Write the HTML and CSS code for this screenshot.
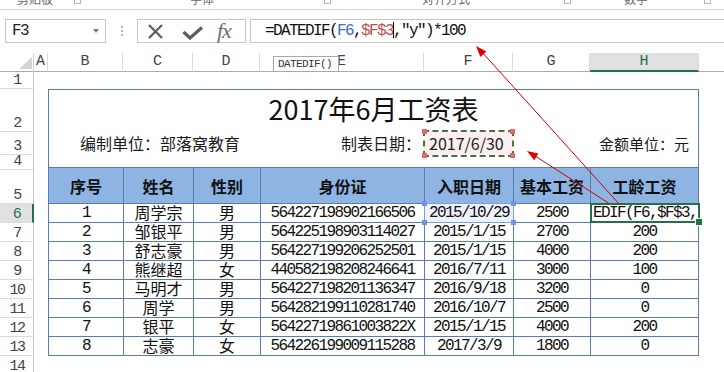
FILE: index.html
```html
<!DOCTYPE html>
<html lang="zh-CN">
<head>
<meta charset="utf-8">
<title>工资表</title>
<link rel="stylesheet" href="styles.css">
</head>
<body>
<div class="ribbon">
  <div class="grp g1"><span class="glabel">剪贴板</span><span class="launch"></span></div>
  <div class="grp g2"><span class="glabel">字体</span><span class="launch"></span></div>
  <div class="grp g3"><span class="glabel">对齐方式</span><span class="launch"></span></div>
  <div class="grp g4"><span class="glabel">数字</span><span class="launch"></span></div>
</div>

<div class="fbar">
  <div class="namebox"><span class="nb-text">F3</span><span class="nb-dd"></span></div>
  <div class="grip"><i></i><i></i><i></i></div>
  <div class="fbtns">
    <svg class="ic-x" width="15" height="15" viewBox="0 0 15 15"><path d="M1 1L14 14M14 1L1 14" stroke="#5c5c5c" stroke-width="2.2" fill="none"/></svg>
    <svg class="ic-ok" width="21" height="14" viewBox="0 0 21 14"><path d="M1.5 6L8 12L20 1.5" stroke="#5c5c5c" stroke-width="3.2" fill="none"/></svg>
    <span class="fx">fx</span>
  </div>
  <div class="finput"><span class="ftext">=DATEDIF(<span class="rb">F6</span>,<span class="rr">$F$3</span><span class="caret"></span>,"y")*100</span></div>
</div>

<div class="sheet">
  <div class="row rch">
    <div class="corner"><svg width="13" height="12" viewBox="0 0 13 12"><path d="M13 0L13 12L0 12Z" fill="#d4d4d4"/></svg></div>
    <div class="ch">A</div><div class="ch">B</div><div class="ch">C</div><div class="ch">D</div><div class="ch">E</div><div class="ch">F</div><div class="ch">G</div><div class="ch ch-sel">H</div><div class="ch-rest"></div>
  </div>

  <div class="row r1"><div class="rh">1</div></div>

  <div class="row r2">
    <div class="rh">2</div><div></div>
    <div class="title">2017年6月工资表</div>
  </div>

  <div class="row r3">
    <div class="rh">3</div><div></div>
    <div class="meta meta-left">编制单位：部落窝教育</div>
    <div class="meta meta-e">制表日期：</div>
    <div class="meta f3">2017/6/30</div>
    <div class="meta"></div>
    <div class="meta meta-h">金额单位：元</div>
  </div>

  <div class="row r4">
    <div class="rh">4</div><div></div>
    <div class="gap4"></div>
  </div>

  <div class="row r5">
    <div class="rh">5</div><div></div>
    <div class="th">序号</div><div class="th">姓名</div><div class="th">性别</div><div class="th">身份证</div><div class="th">入职日期</div><div class="th">基本工资</div><div class="th last">工龄工资</div>
  </div>

  <div class="row rd">
    <div class="rh rh-sel">6</div><div></div>
    <div class="td num">1</div><div class="td cjk">周学宗</div><div class="td cjk">男</div><div class="td num">564227198902166506</div><div class="td num f6">2015/10/29</div><div class="td num">2500</div><div class="td num last h6"><span class="h6-clip">EDIF(F6,$F$3,"y")*100</span></div>
  </div>
  <div class="row rd">
    <div class="rh">7</div><div></div>
    <div class="td num">2</div><div class="td cjk">邹银平</div><div class="td cjk">男</div><div class="td num">564225198903114027</div><div class="td num">2015/1/15</div><div class="td num">2700</div><div class="td num last">200</div>
  </div>
  <div class="row rd">
    <div class="rh">8</div><div></div>
    <div class="td num">3</div><div class="td cjk">舒志豪</div><div class="td cjk">男</div><div class="td num">564227199206252501</div><div class="td num">2015/1/15</div><div class="td num">4000</div><div class="td num last">200</div>
  </div>
  <div class="row rd">
    <div class="rh">9</div><div></div>
    <div class="td num">4</div><div class="td cjk">熊继超</div><div class="td cjk">女</div><div class="td num">440582198208246641</div><div class="td num">2016/7/11</div><div class="td num">3000</div><div class="td num last">100</div>
  </div>
  <div class="row rd">
    <div class="rh">10</div><div></div>
    <div class="td num">5</div><div class="td cjk">马明才</div><div class="td cjk">男</div><div class="td num">564227198201136347</div><div class="td num">2016/9/18</div><div class="td num">3200</div><div class="td num last">0</div>
  </div>
  <div class="row rd">
    <div class="rh">11</div><div></div>
    <div class="td num">6</div><div class="td cjk">周学</div><div class="td cjk">男</div><div class="td num">564282199110281740</div><div class="td num">2016/10/7</div><div class="td num">2500</div><div class="td num last">0</div>
  </div>
  <div class="row rd">
    <div class="rh">12</div><div></div>
    <div class="td num">7</div><div class="td cjk">银平</div><div class="td cjk">女</div><div class="td num">56422719861003822X</div><div class="td num">2015/1/15</div><div class="td num">4000</div><div class="td num last">200</div>
  </div>
  <div class="row rd">
    <div class="rh">13</div><div></div>
    <div class="td num">8</div><div class="td cjk">志豪</div><div class="td cjk">女</div><div class="td num">564226199009115288</div><div class="td num">2017/3/9</div><div class="td num">1800</div><div class="td num last">0</div>
  </div>
  <div class="row r14"><div class="rh">14</div></div>

  <div class="tip">DATEDIF()</div>
</div>

<svg class="arrows" width="724" height="372" viewBox="0 0 724 372">
  <line x1="620" y1="205" x2="481" y2="51" stroke="#d40000" stroke-width="1"/>
  <polygon points="476,46 486.4,51.5 480.4,56.9" fill="#e00000"/>
  <line x1="610" y1="204" x2="532" y2="154" stroke="#d40000" stroke-width="1"/>
  <polygon points="527,151 538.4,153.5 534.2,160.3" fill="#e00000"/>
</svg>
</body>
</html>
```

FILE: styles.css
```css
* { box-sizing: border-box; }

body {
  margin: 0;
  width: 724px;
  height: 372px;
  overflow: hidden;
  background: #ffffff;
  font-family: "Noto Sans CJK SC", sans-serif;
  color: #000;
}

/* ---------- ribbon tail ---------- */
.ribbon {
  height: 10px;
  border-bottom: 1px solid #d6d6d6;
  display: grid;
  grid-template-columns: 84px 250px 240px 140px 1fr;
  overflow: hidden;
}
.grp {
  display: flex;
  align-items: flex-start;
  height: 9px;
}
.g1 { padding-left: 17px; }
.g2 { padding-left: 106px; }
.g3 { padding-left: 88px; }
.g4 { padding-left: 50px; }
.glabel {
  font-size: 12px;
  line-height: 12px;
  color: #6a6a6a;
  margin-top: -7px;
  white-space: nowrap;
}
.launch {
  margin-left: auto;
  margin-right: 3px;
  width: 7px;
  height: 5px;
  margin-top: -1px;
  border: 1px solid #b5b5b5;
  border-top: none;
}

/* ---------- formula bar ---------- */
.fbar {
  display: flex;
  height: 24px;
  margin-top: 9px;
  padding-left: 5px;
}
.namebox {
  width: 101px;
  border: 1px solid #c6c6c6;
  display: flex;
  align-items: center;
  padding-left: 6px;
}
.nb-text {
  font-family: "Liberation Mono", monospace;
  font-size: 16px;
  letter-spacing: -1.6px;
  color: #222;
}
.nb-dd {
  margin-left: auto;
  margin-right: 6px;
  width: 0;
  height: 0;
  border-left: 3.5px solid transparent;
  border-right: 3.5px solid transparent;
  border-top: 4px solid #7a7a7a;
}
.grip {
  width: 31px;
  display: flex;
  flex-direction: column;
  align-items: center;
  justify-content: center;
  gap: 2px;
}
.grip i {
  display: block;
  width: 2px;
  height: 2px;
  background: #b4b4b4;
}
.fbtns {
  width: 109px;
  border: 1px solid #c6c6c6;
  display: flex;
  align-items: center;
  padding-left: 10px;
}
.ic-ok { margin-left: 19px; margin-top: 3px; }
.fx {
  margin-left: 14px;
  font-family: "Liberation Serif", serif;
  font-style: italic;
  font-size: 22px;
  line-height: 20px;
  color: #6e6e6e;
  letter-spacing: -1px;
}
.finput {
  flex: 1;
  margin-left: 4px;
  margin-right: -2px;
  border: 1px solid #c6c6c6;
  padding-left: 14px;
  display: flex;
  align-items: center;
}
.ftext {
  font-family: "Liberation Mono", monospace;
  font-size: 16px;
  letter-spacing: -1.6px;
  color: #111;
  white-space: nowrap;
}
.rb { color: #3b6fd4; }
.rr { color: #c0504d; }
.caret {
  display: inline-block;
  width: 1px;
  height: 16px;
  margin-right: -1px;
  background: #000;
  vertical-align: -3px;
}

/* ---------- sheet ---------- */
.sheet {
  margin-top: 10px;
  position: relative;
}
.row {
  display: grid;
  grid-template-columns: 34px 14px 75px 70px 67px 164px 89px 77px 109px 1fr;
}
.rch { height: 18px; }
.r1 { height: 18px; }
.r2 { height: 43px; }
.r3 { height: 23px; }
.r4 { height: 12px; }
.r5 { height: 37px; }
.rd { height: 19px; }
.r14 { height: 19px; }

.corner {
  border-right: 1px solid #d8d8d8;
  border-bottom: 1px solid #ababab;
  display: flex;
  justify-content: flex-end;
  align-items: flex-end;
  padding: 0 1px 2px 0;
}
.ch {
  border-right: 1px solid #dadada;
  border-bottom: 1px solid #ababab;
  text-align: center;
  font-family: "Liberation Mono", monospace;
  font-size: 15px;
  line-height: 17px;
  color: #444;
}
.ch-sel {
  background: #e1e1e1;
  color: #217346;
  border-bottom: 2px solid #217346;
}
.ch-rest { border-bottom: 1px solid #ababab; }

.rh {
  border-right: 1px solid #c6c6c6;
  border-bottom: 1px solid #dadada;
  display: flex;
  align-items: flex-end;
  justify-content: center;
  font-family: "Liberation Mono", monospace;
  font-size: 15px;
  line-height: 14px;
  letter-spacing: -1.5px;
  padding-left: 1px;
  color: #444;
}
.rh-sel {
  background: #e1e1e1;
  color: #217346;
  border-right: 2px solid #217346;
}

/* ---------- table ---------- */
.title {
  grid-column: span 7;
  border: 1px solid #5b7cb0;
  border-bottom: none;
  text-align: center;
  font-size: 27px;
  line-height: 27px;
  padding-top: 5px;
  color: #111;
}
.meta {
  font-size: 16px;
  line-height: 23px;
  color: #1a1a1a;
  white-space: nowrap;
}
.meta-left {
  grid-column: span 3;
  border-left: 1px solid #5b7cb0;
  padding-left: 31px;
}
.meta-e { text-align: right; padding-right: 3px; }
.meta-h {
  text-align: right;
  padding-right: 9px;
  border-right: 1px solid #5b7cb0;
  font-size: 15px;
}
.f3 {
  position: relative;
  padding-left: 5px;
  background: #fcefef;
  color: #222;
}
.f3::before {
  content: "";
  position: absolute;
  left: -1px;
  right: -1px;
  top: -2px;
  bottom: -2px;
  border: 2px dashed #56684a;
}
.f3::after {
  content: "";
  position: absolute;
  left: -2px;
  right: -2px;
  top: -3px;
  bottom: -3px;
  background:
    linear-gradient(#e46a6a, #e46a6a) left top / 5px 5px no-repeat,
    linear-gradient(#e46a6a, #e46a6a) right top / 5px 5px no-repeat,
    linear-gradient(#e46a6a, #e46a6a) left bottom / 5px 5px no-repeat,
    linear-gradient(#e46a6a, #e46a6a) right bottom / 5px 5px no-repeat;
}
.gap4 {
  grid-column: span 7;
  border-left: 1px solid #5b7cb0;
  border-right: 1px solid #5b7cb0;
}

.th {
  background: #8db4e2;
  border-top: 1px solid #5b7cb0;
  border-left: 1px solid #5b7cb0;
  border-bottom: 1px solid #5b7cb0;
  font-size: 16px;
  font-weight: 700;
  display: flex;
  align-items: center;
  justify-content: center;
  color: #111;
}
.td {
  border-left: 1px solid #5b7cb0;
  border-bottom: 1px solid #5b7cb0;
  display: flex;
  align-items: center;
  justify-content: center;
  line-height: 16px;
  white-space: nowrap;
  color: #111;
  min-width: 0;
}
.last { border-right: 1px solid #5b7cb0; }
.num {
  font-family: "Liberation Mono", monospace;
  font-size: 16px;
  letter-spacing: -1.6px;
}
.cjk {
  font-size: 16px;
  line-height: 16px;
  padding-bottom: 2px;
}

.f6 {
  position: relative;
  background: #edf2fc;
}
.f6::before {
  content: "";
  position: absolute;
  left: -1px;
  right: -1px;
  top: -1px;
  bottom: -1px;
  border: 1px solid #7b9de4;
}
.f6::after {
  content: "";
  position: absolute;
  left: -3px;
  right: -3px;
  top: -3px;
  bottom: -3px;
  background:
    linear-gradient(#6f93dc, #6f93dc) left top / 5px 5px no-repeat,
    linear-gradient(#6f93dc, #6f93dc) right top / 5px 5px no-repeat,
    linear-gradient(#6f93dc, #6f93dc) left bottom / 5px 5px no-repeat,
    linear-gradient(#6f93dc, #6f93dc) right bottom / 5px 5px no-repeat;
}

.h6 {
  position: relative;
  justify-content: flex-start;
  padding-left: 2px;
}
.h6-clip {
  display: block;
  overflow: hidden;
  width: 104px;
  white-space: nowrap;
}
.h6::before {
  content: "";
  position: absolute;
  left: -1px;
  right: -2px;
  top: -1px;
  bottom: -1px;
  border: 2px solid #217346;
}
.h6::after {
  content: "";
  position: absolute;
  right: -5px;
  bottom: -4px;
  width: 6px;
  height: 6px;
  background: #217346;
  border: 1px solid #fff;
}

/* ---------- overlays ---------- */
.tip {
  position: absolute;
  left: 273px;
  top: 3px;
  width: 66px;
  height: 16px;
  border: 1px solid #a8a8a8;
  background: #fff;
  font-family: "Liberation Mono", monospace;
  font-size: 11px;
  letter-spacing: -0.6px;
  line-height: 14px;
  padding-left: 4px;
  color: #333;
}
.arrows {
  position: absolute;
  left: 0;
  top: 0;
  pointer-events: none;
}
```
